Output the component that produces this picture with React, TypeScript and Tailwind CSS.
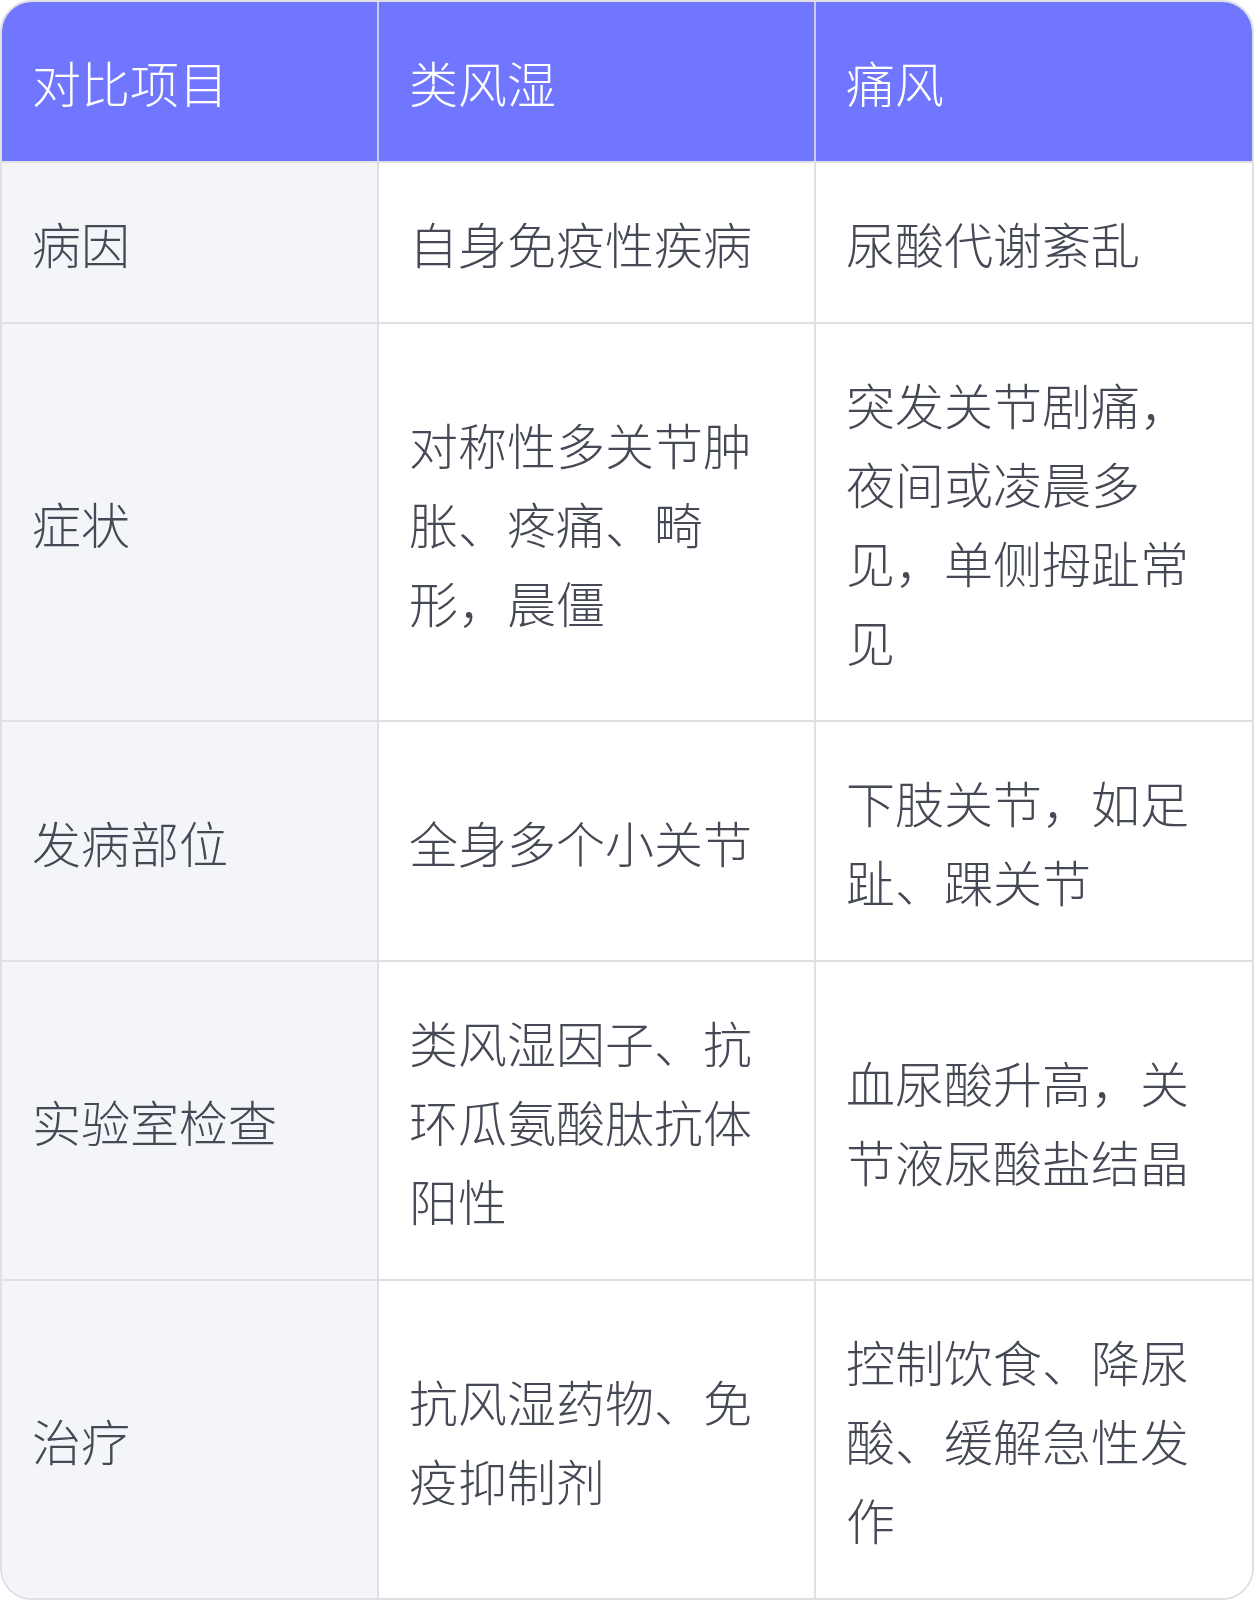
const HEAD = ['对比项目', '类风湿', '痛风']

const ROWS = [
  { item: '病因', ra: '自身免疫性疾病', gout: '尿酸代谢紊乱' },
  { item: '症状', ra: '对称性多关节肿胀、疼痛、畸形，晨僵', gout: '突发关节剧痛，夜间或凌晨多见，单侧拇趾常见' },
  { item: '发病部位', ra: '全身多个小关节', gout: '下肢关节，如足趾、踝关节' },
  { item: '实验室检查', ra: '类风湿因子、抗环瓜氨酸肽抗体阳性', gout: '血尿酸升高，关节液尿酸盐结晶' },
  { item: '治疗', ra: '抗风湿药物、免疫抑制剂', gout: '控制饮食、降尿酸、缓解急性发作' },
]

const cell = 'flex items-center px-[30px] py-10 text-[49px] font-light leading-[79px]'

export default function App() {
  return (
    <div
      className="w-[1254px] bg-white"
      style={{ fontFamily: '"Noto Sans CJK SC", "Noto Sans", sans-serif' }}
    >
      <div className="overflow-hidden rounded-[32px] border-2 border-[#dfe0e5]">
        <div className="grid grid-cols-[375px_437px_1fr]">
          {HEAD.map((h, i) => (
            <div
              key={h}
              className={`${cell} bg-[#7176ff] text-white ${i > 0 ? 'border-l-2 border-[#c9cbf3]' : ''}`}
            >
              {h}
            </div>
          ))}
          {ROWS.map(({ item, ra, gout }) => (
            <div key={item} className="contents">
              <div className={`${cell} border-t-2 border-[#dfe0e5] bg-[#f4f5f9] text-[#454955]`}>{item}</div>
              <div className={`${cell} border-t-2 border-l-2 border-[#dfe0e5] bg-white text-[#454955]`}>{ra}</div>
              <div className={`${cell} border-t-2 border-l-2 border-[#dfe0e5] bg-white text-[#454955]`}>{gout}</div>
            </div>
          ))}
        </div>
      </div>
    </div>
  )
}
